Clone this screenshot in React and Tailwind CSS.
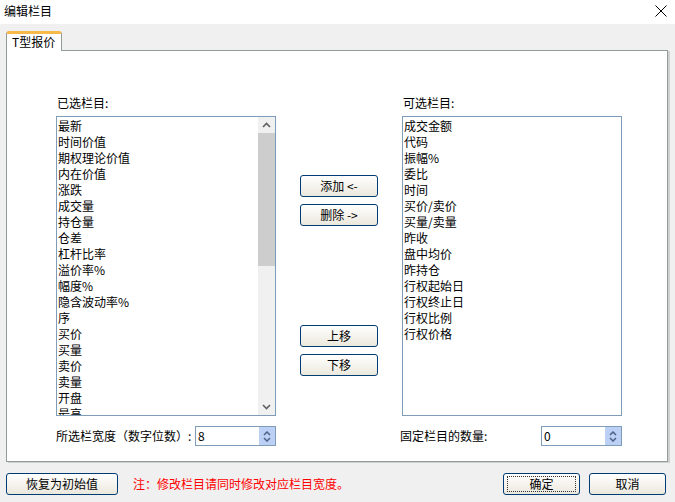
import React from 'react';

const SELECTED = ['最新', '时间价值', '期权理论价值', '内在价值', '涨跌', '成交量', '持仓量', '仓差', '杠杆比率', '溢价率%', '幅度%', '隐含波动率%', '序', '买价', '买量', '卖价', '卖量', '开盘', '最高'];
const AVAILABLE = ['成交金额', '代码', '振幅%', '委比', '时间', '买价/卖价', '买量/卖量', '昨收', '盘中均价', '昨持仓', '行权起始日', '行权终止日', '行权比例', '行权价格'];

function Chevron({ up }) {
  return (
    <svg width="9" height="6" viewBox="0 0 9 6">
      <path d={up ? 'M1 5 L4.5 1.5 L8 5' : 'M1 1 L4.5 4.5 L8 1'} fill="none" stroke="#606060" strokeWidth="1.6" />
    </svg>
  );
}

function Button({ children, className = '', focused = false }) {
  return (
    <div className={`h-[22px] flex items-center justify-center border border-[#003c74] rounded-[3px] bg-linear-to-b from-white to-[#ebe8dd] text-[12px] text-black ${className}`}>
      {focused ? (
        <span className="flex items-center justify-center w-[calc(100%-6px)] h-[16px] border border-dotted border-[#333]">{children}</span>
      ) : children}
    </div>
  );
}

function Spin({ value }) {
  return (
    <div className="w-[81px] h-[20px] border border-[#7f9db9] bg-white flex">
      <div className="flex-1 pl-[2px] text-[12px] leading-[18px]">{value}</div>
      <div className="w-[16px] bg-[#bcd0f6] flex flex-col items-center justify-center gap-[1px]">
        <svg width="8" height="5" viewBox="0 0 8 5"><path d="M1 4 L4 1 L7 4" fill="none" stroke="#4d6185" strokeWidth="1.5" /></svg>
        <svg width="8" height="5" viewBox="0 0 8 5"><path d="M1 1 L4 4 L7 1" fill="none" stroke="#4d6185" strokeWidth="1.5" /></svg>
      </div>
    </div>
  );
}

export default function App() {
  return (
    <div className="w-[675px] h-[502px] bg-[#f0f0f0] flex flex-col font-['Noto_Sans_CJK_SC','Liberation_Sans',sans-serif] text-[12px] text-black overflow-hidden">
      {/* title bar */}
      <div className="h-[24px] bg-white flex items-center justify-between pl-[4px] pr-[8px]">
        <span className="text-[12px] leading-[14px] -mt-[2px]">编辑栏目</span>
        <svg width="12" height="12" viewBox="0 0 12 12" className="-mt-[2px]">
          <path d="M0.5 0.5 L11.5 11.5 M11.5 0.5 L0.5 11.5" stroke="#000" strokeWidth="1" />
        </svg>
      </div>

      {/* tab */}
      <div className="mt-[7px] ml-[6px] flex">
        <div className="relative z-10 w-[56px] h-[20px] -mb-px bg-white border-x border-[#919b9c] rounded-t-[3px] border-t-[3px] border-t-[#f6b94a] flex items-start pl-[5px] text-[12px] leading-[15px]">
          T型报价
        </div>
      </div>

      {/* panel */}
      <div className="ml-[6px] w-[662px] h-[412px] bg-white border border-[#919b9c] shadow-[2px_1px_0_#d0d0cf] flex pl-[49px] pt-[45px]">
        {/* left column */}
        <div className="w-[220px] flex flex-col">
          <div className="leading-[14px] mb-[6px] pl-[1px]">已选栏目:</div>
          <div className="h-[300px] border border-[#7f9db9] flex overflow-hidden">
            <div className="flex-1 pl-[1px] pt-[1px]">
              {SELECTED.map((s) => (
                <div key={s} className="h-[16px] leading-[16px] whitespace-nowrap">{s}</div>
              ))}
            </div>
            <div className="w-[17px] bg-[#f0f0f0] flex flex-col">
              <div className="h-[16px] flex items-center justify-center"><Chevron up /></div>
              <div className="h-[133px] bg-[#cdcdcd]" />
              <div className="flex-1" />
              <div className="h-[16px] flex items-center justify-center"><Chevron /></div>
            </div>
          </div>
          <div className="mt-[10px] flex items-center justify-between">
            <span>所选栏宽度（数字位数）:</span>
            <Spin value="8" />
          </div>
        </div>

        {/* middle buttons */}
        <div className="w-[126px] flex flex-col items-center pt-[79px]">
          <Button className="w-[78px] h-[21px]">添加 &lt;-</Button>
          <Button className="w-[78px] h-[21px] mt-[7px]">删除 -&gt;</Button>
          <Button className="w-[78px] h-[21px] mt-[99px]">上移</Button>
          <Button className="w-[78px] h-[21px] mt-[7px]">下移</Button>
        </div>

        {/* right column */}
        <div className="w-[220px] flex flex-col">
          <div className="leading-[14px] mb-[6px] pl-[1px]">可选栏目:</div>
          <div className="h-[300px] border border-[#7f9db9] pl-[1px] pt-[1px] overflow-hidden">
            {AVAILABLE.map((s) => (
              <div key={s} className="h-[16px] leading-[16px] whitespace-nowrap">{s}</div>
            ))}
          </div>
          <div className="mt-[10px] flex items-center justify-between -ml-[2px]">
            <span>固定栏目的数量:</span>
            <Spin value="0" />
          </div>
        </div>
      </div>

      {/* bottom bar */}
      <div className="mt-[11px] flex items-center pl-[6px] pr-[9px]">
        <Button className="w-[112px]">恢复为初始值</Button>
        <span className="ml-[15px] text-[#ff0000]">注：修改栏目请同时修改对应栏目宽度。</span>
        <div className="flex-1" />
        <Button className="w-[77px]" focused>确定</Button>
        <Button className="w-[77px] ml-[9px]">取消</Button>
      </div>
    </div>
  );
}
